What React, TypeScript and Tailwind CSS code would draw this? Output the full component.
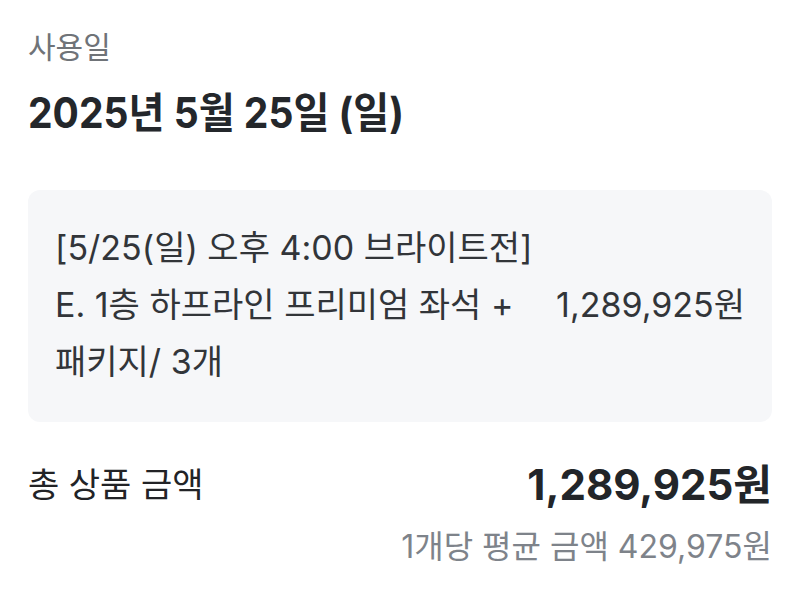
import React from "react";

const font = "font-['Inter','Noto_Sans_CJK_KR',sans-serif]";

export default function App() {
  return (
    <div className={`w-[800px] h-[591px] bg-white px-[28px] overflow-hidden ${font}`}>
      <div className="pt-[27px]">
        <span className="inline-block whitespace-nowrap text-[30px] leading-[40px] text-[#6f7378]">
          사용일
        </span>
      </div>
      <div className="mt-[21px]">
        <span className="inline-block origin-left scale-x-[0.93] whitespace-nowrap text-[42px] leading-[50px] font-bold text-[#24272b]">
          2025년 5월 25일 (일)
        </span>
      </div>

      <div className="mt-[52px] h-[232px] rounded-[12px] bg-[#f6f7f9] px-[27px] pb-[4px] flex items-center justify-between">
        <div className="min-w-0 flex-1">
          <div className="whitespace-nowrap text-[34px] leading-[57px] text-[#323539]">
            <div>[5/25(일) 오후 4:00 브라이트전]</div>
            <div>E. 1층 하프라인 프리미엄 좌석 +</div>
            <div>패키지/ 3개</div>
          </div>
        </div>
        <div className="shrink-0 whitespace-nowrap text-[34px] leading-[57px] text-[#323539]">
          1,289,925원
        </div>
      </div>

      <div className="mt-[37px] flex justify-between items-start">
        <span className="inline-block whitespace-nowrap text-[34px] leading-[52px] text-[#222326]">
          총 상품 금액
        </span>
        <div className="flex flex-col items-end">
          <span className="inline-block whitespace-nowrap text-[42px] leading-[52px] font-bold text-[#222529]">
            1,289,925원
          </span>
          <span className="mt-[16px] inline-block whitespace-nowrap text-[32px] leading-[40px] text-[#7e838a]">
            1개당 평균 금액 429,975원
          </span>
        </div>
      </div>
    </div>
  );
}
